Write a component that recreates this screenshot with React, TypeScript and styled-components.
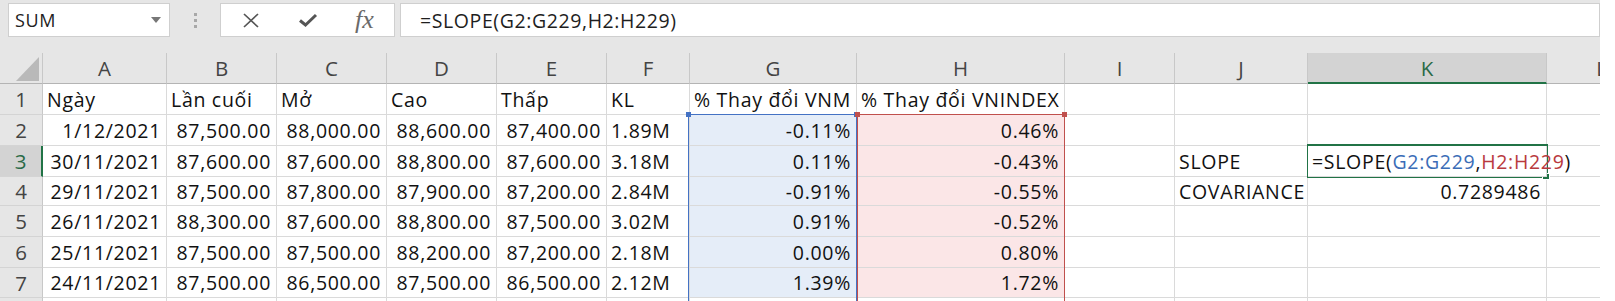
import styled, { createGlobalStyle } from "styled-components";

const GlobalStyle = createGlobalStyle`
  body {
    margin: 0;
    background: #ffffff;
    font-family: "Open Sans", "Liberation Sans", sans-serif;
  }
`;

const Window = styled.div`
  width: 1600px;
  height: 301px;
  overflow: hidden;
  background: #e6e6e6;
`;

const FormulaBar = styled.div`
  display: flex;
  height: 34px;
  padding: 3px 0 16px 8px;
`;

const NameBox = styled.div`
  width: 162px;
  box-sizing: border-box;
  display: flex;
  align-items: center;
  justify-content: space-between;
  padding: 0 8px 0 6px;
  background: #ffffff;
  border: 1px solid #cfcfcf;
  font-size: 18px;
  letter-spacing: 0.6px;
  color: #222;
`;

const Caret = styled.span`
  width: 0;
  height: 0;
  border-left: 5px solid transparent;
  border-right: 5px solid transparent;
  border-top: 6px solid #777;
`;

const Grip = styled.div`
  width: 50px;
  display: flex;
  flex-direction: column;
  align-items: center;
  justify-content: center;
  gap: 3px;
`;

const GripDot = styled.span`
  width: 3px;
  height: 3px;
  background: #a8a8a8;
`;

const FuncBox = styled.div`
  width: 175px;
  box-sizing: border-box;
  display: flex;
  align-items: center;
  gap: 37px;
  padding-left: 20px;
  background: #ffffff;
  border: 1px solid #cfcfcf;
  color: #555;
`;

const Fx = styled.span`
  font-family: "Liberation Serif", serif;
  font-style: italic;
  font-size: 26px;
  color: #6a6a6a;
  line-height: 1;
`;

const FormulaInput = styled.div`
  flex: 1;
  margin-left: 5px;
  display: flex;
  align-items: center;
  padding-left: 19px;
  background: #ffffff;
  border: 1px solid #cfcfcf;
  font-size: 19.5px;
  letter-spacing: 0.6px;
  color: #1e1e1e;
`;

const COLS = ["A", "B", "C", "D", "E", "F", "G", "H", "I", "J", "K", "L"];
const WIDTHS = [124, 110, 110, 110, 110, 83, 167, 208, 110, 133, 239, 110];
const HEIGHTS = [31, 31, 31, 31, 29, 31, 31, 30, 20];

const Sheet = styled.div`
  display: grid;
  grid-template-columns: 43px ${WIDTHS.map((w) => `${w}px`).join(" ")};
  grid-template-rows: ${HEIGHTS.map((h) => `${h}px`).join(" ")};
  background: #ffffff;
`;

const Corner = styled.div`
  grid-column: 1;
  grid-row: 1;
  display: flex;
  align-items: flex-end;
  justify-content: flex-end;
  padding: 0 3px 2px 0;
  background: #e6e6e6;
  border-right: 1px solid #c8c8c8;
  border-bottom: 1px solid #b4b4b4;
`;

const CornerMark = styled.span`
  width: 0;
  height: 0;
  border-left: 23px solid transparent;
  border-bottom: 24px solid #b9b9b9;
`;

const ColHead = styled.div<{ $col: number; $selected?: boolean }>`
  grid-column: ${(p) => p.$col};
  grid-row: 1;
  display: flex;
  align-items: center;
  justify-content: center;
  font-size: 20.5px;
  color: ${(p) => (p.$selected ? "#2a6a47" : "#444")};
  background: ${(p) => (p.$selected ? "#d3d3d3" : "#e6e6e6")};
  border-right: 1px solid #c8c8c8;
  border-bottom: ${(p) => (p.$selected ? "2px solid #217346" : "1px solid #b4b4b4")};
`;

const RowHead = styled.div<{ $row: number; $selected?: boolean }>`
  grid-column: 1;
  grid-row: ${(p) => p.$row};
  display: flex;
  align-items: center;
  justify-content: center;
  font-size: 20.5px;
  color: ${(p) => (p.$selected ? "#2a6a47" : "#444")};
  background: ${(p) => (p.$selected ? "#d3d3d3" : "#e6e6e6")};
  border-right: ${(p) => (p.$selected ? "2px solid #217346" : "1px solid #c8c8c8")};
  border-bottom: 1px solid #d4d4d4;
`;

const Cell = styled.div<{ $row: number; $col: number; $right?: boolean; $fill?: string; $front?: boolean }>`
  grid-column: ${(p) => p.$col};
  grid-row: ${(p) => p.$row};
  display: flex;
  align-items: center;
  justify-content: ${(p) => (p.$right ? "flex-end" : "flex-start")};
  padding: 0 5px 0 4px;
  white-space: nowrap;
  overflow: ${(p) => (p.$front ? "visible" : "hidden")};
  font-size: 19.5px;
  letter-spacing: 0.7px;
  color: #111;
  background: ${(p) => p.$fill ?? "#ffffff"};
  border-right: 1px solid #dadada;
  border-bottom: 1px solid #dadada;
  position: relative;
  z-index: ${(p) => (p.$front ? 4 : 0)};
`;

const RangeBox = styled.div<{ $color: string; $col: number; $shift: number }>`
  grid-column: ${(p) => p.$col};
  grid-row: 3 / -1;
  position: relative;
  z-index: 2;
  margin: -1px 0 0 ${(p) => -p.$shift}px;
  border: 1px solid ${(p) => p.$color};
  pointer-events: none;
`;

const Handle = styled.span<{ $color: string; $side: "left" | "right" }>`
  position: absolute;
  top: -3px;
  ${(p) => p.$side}: -3px;
  width: 5px;
  height: 5px;
  background: ${(p) => p.$color};
`;

const ActiveBox = styled.div`
  grid-column: 12;
  grid-row: 4;
  position: relative;
  z-index: 3;
  margin: -2px -1px -1px -1px;
  border: 2px solid #217346;
  pointer-events: none;
`;

const FillHandle = styled.span`
  position: absolute;
  right: -4px;
  bottom: -4px;
  width: 6px;
  height: 5px;
  background: #217346;
  border: 1px solid #ffffff;
`;

const Ref = styled.span<{ $color: string }>`
  color: ${(p) => p.$color};
`;

const TextCursor = styled.span`
  display: inline-block;
  width: 1px;
  height: 22px;
  margin-left: 2px;
  background: #000;
`;

type Row = (string | null)[];

// null = empty, leading "<" marks left aligned text
const ROWS: Row[] = [
  ["<Ngày", "<Lần cuối", "<Mở", "<Cao", "<Thấp", "<KL", "<% Thay đổi VNM", "<% Thay đổi VNINDEX", null, null, null, null],
  ["1/12/2021", "87,500.00", "88,000.00", "88,600.00", "87,400.00", "<1.89M", "-0.11%", "0.46%", null, null, null, null],
  ["30/11/2021", "87,600.00", "87,600.00", "88,800.00", "87,600.00", "<3.18M", "0.11%", "-0.43%", null, "<SLOPE", "EDIT", null],
  ["29/11/2021", "87,500.00", "87,800.00", "87,900.00", "87,200.00", "<2.84M", "-0.91%", "-0.55%", null, "<COVARIANCE", "0.7289486", null],
  ["26/11/2021", "88,300.00", "87,600.00", "88,800.00", "87,500.00", "<3.02M", "0.91%", "-0.52%", null, null, null, null],
  ["25/11/2021", "87,500.00", "87,500.00", "88,200.00", "87,200.00", "<2.18M", "0.00%", "0.80%", null, null, null, null],
  ["24/11/2021", "87,500.00", "86,500.00", "87,500.00", "86,500.00", "<2.12M", "1.39%", "1.72%", null, null, null, null],
  [null, null, null, null, null, null, null, null, null, null, null, null],
];

const BLUE = "#4472c4";
const RED = "#c0504d";

function fillFor(row: number, col: number) {
  if (row < 1 || row > 6) return undefined;
  if (col === 6) return "#e5edf8";
  if (col === 7) return "#fbe6e7";
  return undefined;
}

function FormulaEdit() {
  return (
    <>
      =SLOPE(<Ref $color="#3b6db7">G2:G229</Ref>,<Ref $color="#b93a3e">H2:H229</Ref>)
      <TextCursor />
    </>
  );
}

export default function App() {
  return (
    <Window>
      <GlobalStyle />
      <FormulaBar>
        <NameBox>
          SUM
          <Caret />
        </NameBox>
        <Grip>
          <GripDot />
          <GripDot />
          <GripDot />
        </Grip>
        <FuncBox>
          <svg width="20" height="15" viewBox="0 0 20 15">
            <path d="M3 1 L17 14 M17 1 L3 14" stroke="#555" strokeWidth="1.7" fill="none" />
          </svg>
          <svg width="20" height="14" viewBox="0 0 20 14">
            <path d="M2 7.5 L7.5 12 L18 2" stroke="#555" strokeWidth="3" fill="none" strokeLinejoin="miter" />
          </svg>
          <Fx>fx</Fx>
        </FuncBox>
        <FormulaInput>=SLOPE(G2:G229,H2:H229)</FormulaInput>
      </FormulaBar>

      <Sheet>
        <Corner>
          <CornerMark />
        </Corner>
        {COLS.map((c, i) => (
          <ColHead key={c} $col={i + 2} $selected={c === "K"}>
            {c}
          </ColHead>
        ))}
        {ROWS.map((row, r) => [
          // the last row only shows a sliver, so no number
          <RowHead key={`h${r}`} $row={r + 2} $selected={r === 2}>
            {r < 7 ? r + 1 : null}
          </RowHead>,
          ...row.map((v, c) => {
            const left = v?.startsWith("<");
            const isEdit = v === "EDIT";
            return (
              <Cell
                key={`${r}-${c}`}
                $row={r + 2}
                $col={c + 2}
                $right={!!v && !left && !isEdit}
                $fill={fillFor(r, c)}
                $front={isEdit}
              >
                {isEdit ? <FormulaEdit /> : left ? v!.slice(1) : v}
              </Cell>
            );
          }),
        ])}
        <RangeBox $color={BLUE} $col={8} $shift={2}>
          <Handle $color={BLUE} $side="left" />
          <Handle $color={BLUE} $side="right" />
        </RangeBox>
        <RangeBox $color={RED} $col={9} $shift={0}>
          <Handle $color={RED} $side="left" />
          <Handle $color={RED} $side="right" />
        </RangeBox>
        <ActiveBox>
          <FillHandle />
        </ActiveBox>
      </Sheet>
    </Window>
  );
}
